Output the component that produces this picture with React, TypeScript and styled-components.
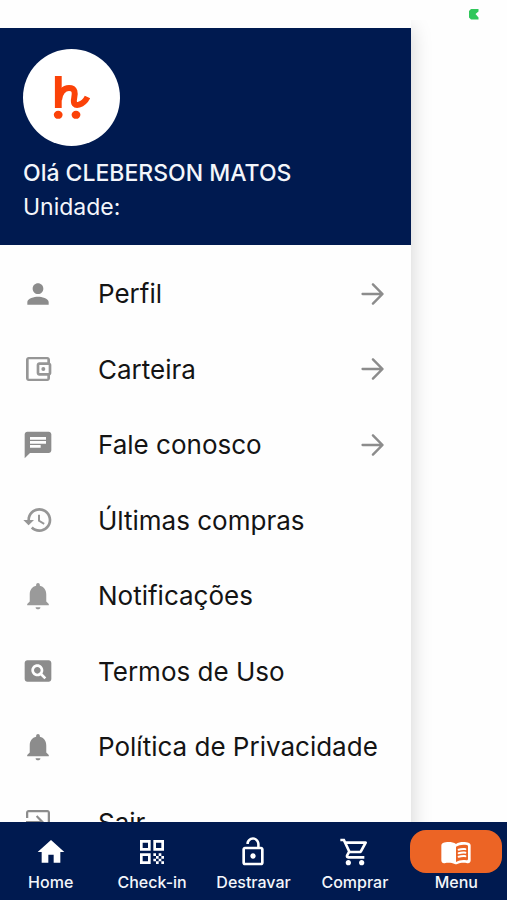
import React from "react";
import styled, { createGlobalStyle } from "styled-components";

const navy = "#001a50";
const orange = "#ec6425";

const GlobalStyle = createGlobalStyle`
  *, *::before, *::after { box-sizing: border-box; }
  body {
    margin: 0;
    background: #fff;
    font-family: Inter, Roboto, "Liberation Sans", sans-serif;
  }
`;

const Screen = styled.div`
  display: flex;
  flex-direction: column;
  height: 100vh;
  overflow: hidden;
  background: #fefefe;
`;

const StatusBar = styled.div`
  display: flex;
  justify-content: flex-end;
  flex: none;
  height: 20px;
  padding: 9px 28px 0 0;
  background: #fefefe;
`;

const Content = styled.main`
  flex: 1;
  min-height: 0;
  overflow: hidden;
`;

const Drawer = styled.aside`
  width: 81%;
  min-height: 100%;
  padding-top: 8px;
  background: #fefefe;
  box-shadow: 0 8px 20px rgba(0, 0, 0, 0.18);
`;

const Profile = styled.header`
  padding: 21px 23px;
  background: ${navy};
  color: #f4f6fb;
`;

const Avatar = styled.div`
  display: grid;
  place-items: center;
  width: 97px;
  height: 97px;
  margin-bottom: 10px;
  border-radius: 50%;
  background: #fff;
`;

const Greeting = styled.h1`
  margin: 0;
  font-size: 23px;
  font-weight: 500;
  line-height: 34px;
  white-space: nowrap;
`;

const Unit = styled.p`
  margin: 0;
  font-size: 23px;
  line-height: 34px;
`;

const MenuList = styled.ul`
  display: grid;
  grid-template-rows: repeat(8, 1fr);
  height: 604px;
  margin: 11px 0 0;
  padding: 0;
  list-style: none;
`;

const MenuButton = styled.button`
  display: flex;
  align-items: center;
  width: 100%;
  height: 100%;
  padding: 0 22px;
  border: 0;
  background: none;
  color: #141414;
  font: inherit;
  font-size: 26px;
  text-align: left;
  cursor: pointer;
`;

const MenuLabel = styled.span`
  flex: 1;
  margin-left: 44px;
  white-space: nowrap;
`;

const Glyph = styled.svg<{ $tone: string }>`
  display: block;
  flex: none;
  width: 32px;
  height: 32px;
  fill: ${(p) => p.$tone};
`;

const BottomNav = styled.nav`
  display: grid;
  grid-template-columns: repeat(5, 1fr);
  flex: none;
  height: 78px;
  padding-top: 8px;
  background: ${navy};
`;

const Tab = styled.a`
  display: flex;
  flex-direction: column;
  align-items: center;
  color: #f4f6fb;
  font-size: 16px;
  font-weight: 500;
  line-height: 18px;
  text-decoration: none;
`;

const Pill = styled.span<{ $active: boolean }>`
  display: grid;
  place-items: center;
  width: 92px;
  height: 43px;
  border-radius: 16px;
  background: ${(p) => (p.$active ? orange : "transparent")};
`;

const icons = {
  person:
    "M12 12c2.21 0 4-1.79 4-4s-1.79-4-4-4-4 1.79-4 4 1.79 4 4 4zm0 2c-2.67 0-8 1.34-8 4v2h16v-2c0-2.66-5.33-4-8-4z",
  wallet:
    "M21 7.28V5c0-1.1-.9-2-2-2H5c-1.11 0-2 .9-2 2v14c0 1.1.89 2 2 2h14c1.1 0 2-.9 2-2v-2.28c.59-.35 1-.98 1-1.72V9c0-.74-.41-1.37-1-1.72zM20 9v6h-7V9h7zM5 19.4V4.6h14v2.4h-6c-1.1 0-2 .9-2 2v6c0 1.1.9 2 2 2h6v2.4H5zM16 10.5a1.5 1.5 0 1 0 0 3 1.5 1.5 0 0 0 0-3z",
  chat:
    "M20 2H4c-1.1 0-1.99.9-1.99 2L2 22l4-4h14c1.1 0 2-.9 2-2V4c0-1.1-.9-2-2-2zM6 9h12v2H6V9zm8 5H6v-2h8v2zm4-6H6V6h12v2z",
  history:
    "M13 3c-4.97 0-9 4.03-9 9H1l3.89 3.89.07.14L9 12H6c0-3.87 3.13-7 7-7s7 3.13 7 7-3.13 7-7 7c-1.93 0-3.68-.79-4.94-2.06l-1.42 1.42C8.27 19.99 10.51 21 13 21c4.97 0 9-4.03 9-9s-4.03-9-9-9zm-1 5v5l4.28 2.54.72-1.21-3.5-2.08V8H12z",
  bell:
    "M12 22c1.1 0 1.8-.6 1.8-1.6h-3.600c0 1 .7 1.6 1.8 1.6zM18.2 16.200v-5.400c0-3.300-1.800-5.700-4.800-6.400v-.7c0-.83-.6-1.500-1.400-1.500s-1.400.67-1.400 1.500v.7c-3 .7-4.800 3.100-4.800 6.400v5.400L3.900 18v1h16.200v-1z",
  pageview:
    "M11.5 9C10.12 9 9 10.12 9 11.5s1.12 2.5 2.5 2.5 2.5-1.12 2.5-2.5S12.88 9 11.5 9zM20 4H4c-1.1 0-2 .9-2 2v12c0 1.1.9 2 2 2h16c1.1 0 2-.9 2-2V6c0-1.1-.9-2-2-2zm-3.21 14.21l-2.91-2.91c-.69.44-1.51.7-2.39.7C9.01 16 7 13.99 7 11.5S9.01 7 11.5 7 16 9.01 16 11.5c0 .88-.26 1.69-.7 2.39l2.91 2.9-1.42 1.42z",
  exit:
    "M10.4 15.9L11.5 17l5-5-5-5-1.1 1.1L13.4 11.2H3v1.6h10.4l-3 3.1zM19 3H5c-1.11 0-2 .9-2 2v4h1.7V4.7h14.6v14.6H4.7V15H3v4c0 1.1.89 2 2 2h14c1.1 0 2-.9 2-2V5c0-1.1-.9-2-2-2z",
  arrow:
    "M11.300 4.200c.4-.4 1-.4 1.300 0l7.200 7.200c.3.3.3.900 0 1.200l-7.200 7.200c-.3.4-.9.4-1.300 0s-.3-.9 0-1.300l5.600-5.600H4.200c-.5 0-.9-.4-.9-.9s.4-.9.9-.9h12.700l-5.600-5.600c-.3-.4-.4-.9 0-1.300z",
  home: "M10 20v-6h4v6h5v-8h3L12 3 2 12h3v8z",
  qr:
    "M3 11h8V3H3v8zm2-6h4v4H5V5zM3 21h8v-8H3v8zm2-6h4v4H5v-4zM13 3v8h8V3h-8zm6 6h-4V5h4v4zM19 19h2v2h-2zM13 13h2v2h-2zM15 15h2v2h-2zM13 17h2v2h-2zM15 19h2v2h-2zM17 17h2v2h-2zM17 13h2v2h-2zM19 15h2v2h-2z",
  lock:
    "M12 17c1.1 0 2-.9 2-2s-.9-2-2-2-2 .9-2 2 .9 2 2 2zm6-9h-1V6c0-2.76-2.24-5-5-5S7 3.24 7 6h1.9c0-1.71 1.39-3.1 3.1-3.1 1.71 0 3.1 1.39 3.1 3.1v2H6c-1.1 0-2 .9-2 2v10c0 1.1.9 2 2 2h12c1.1 0 2-.9 2-2V10c0-1.1-.9-2-2-2zm0 12H6V10h12v10z",
  cart:
    "M15.55 13c.75 0 1.41-.41 1.75-1.03l3.58-6.49A.996.996 0 0 0 20.01 4H5.21l-.94-2H1v2h2l3.6 7.59-1.35 2.44C4.52 15.37 5.48 17 7 17h12v-2H7l1.1-2h7.45zM6.16 6h12.15l-2.76 5H8.53L6.16 6zM7 18c-1.1 0-1.99.9-1.99 2S5.9 22 7 22s2-.9 2-2-.9-2-2-2zm10 0c-1.1 0-1.99.9-1.99 2s.89 2 1.99 2 2-.9 2-2-.9-2-2-2z",
  book:
    "M17.5 4.5c-1.95 0-4.05.4-5.5 1.5-1.45-1.1-3.55-1.5-5.5-1.5-1.45 0-2.99.22-4.28.79C1.49 5.62 1 6.33 1 7.14v11.28c0 1.3 1.22 2.26 2.48 1.94.98-.25 2.02-.36 3.02-.36 1.56 0 3.22.26 4.56.92.6.3 1.28.3 1.87 0 1.34-.67 3-.92 4.56-.92 1 0 2.04.11 3.02.36 1.26.33 2.48-.63 2.48-1.94V7.14c0-.81-.49-1.52-1.22-1.85-1.28-.57-2.82-.79-4.27-.79zM21 17.23c0 .63-.58 1.09-1.2.98-.75-.14-1.53-.2-2.3-.2-1.7 0-4.15.65-5.5 1.5V8c1.35-.85 3.8-1.5 5.5-1.5.92 0 1.83.09 2.7.28.46.1.8.51.8.98v9.47zM13.98 11.01c-.32 0-.61-.2-.71-.52-.13-.39.09-.82.48-.94 1.54-.5 3.53-.66 5.36-.45.41.05.71.42.66.83-.05.41-.42.71-.83.66-1.62-.19-3.39-.04-4.73.39-.08.01-.16.03-.23.03zM13.98 13.67c-.32 0-.61-.2-.71-.52-.13-.39.09-.82.48-.94 1.53-.5 3.53-.66 5.36-.45.41.05.71.42.66.83-.05.41-.42.71-.83.66-1.62-.19-3.39-.04-4.73.39-.08.02-.16.03-.23.03zM13.98 16.33c-.32 0-.61-.2-.71-.52-.13-.39.09-.82.48-.94 1.53-.5 3.53-.66 5.36-.45.41.05.71.42.66.83-.05.41-.42.7-.83.66-1.62-.19-3.39-.04-4.73.39-.08.02-.16.03-.23.03z",
};

type IconName = keyof typeof icons;

const Icon = ({ name, tone }: { name: IconName; tone: string }) => (
  <Glyph viewBox="0 0 24 24" $tone={tone} aria-hidden="true">
    <path d={icons[name]} />
  </Glyph>
);

const Logo = () => (
  <svg width="40" height="46" viewBox="1 3 40 46" aria-hidden="true">
    <g fill="none" stroke="#fb4208" strokeLinejoin="round">
      <path d="M7.3 4V36" strokeWidth="6.8" />
      <path
        d="M8 28C8.5 20.5 13 16 18 16C24.5 16 24.2 21 23.2 26C22 31.5 24 33.8 28 32.7C32 31.5 34.5 29 36.500 25"
        strokeWidth="6"
      />
    </g>
    <ellipse cx="7.2" cy="42.8" rx="4.4" ry="4" fill="#fb4208" />
    <ellipse cx="25" cy="42.8" rx="4.4" ry="4" fill="#fb4208" />
  </svg>
);

const menu: { label: string; icon: IconName; tone: string; arrow?: boolean }[] = [
  { label: "Perfil", icon: "person", tone: "#8c8c8c", arrow: true },
  { label: "Carteira", icon: "wallet", tone: "#969696", arrow: true },
  { label: "Fale conosco", icon: "chat", tone: "#8c8c8c", arrow: true },
  { label: "Últimas compras", icon: "history", tone: "#969696" },
  { label: "Notificações", icon: "bell", tone: "#9a9a9a" },
  { label: "Termos de Uso", icon: "pageview", tone: "#8c8c8c" },
  { label: "Política de Privacidade", icon: "bell", tone: "#8c8c8c" },
  { label: "Sair", icon: "exit", tone: "#8c8c8c" },
];

const tabs: { label: string; icon: IconName; active?: boolean }[] = [
  { label: "Home", icon: "home" },
  { label: "Check-in", icon: "qr" },
  { label: "Destravar", icon: "lock" },
  { label: "Comprar", icon: "cart" },
  { label: "Menu", icon: "book", active: true },
];

export default function App() {
  return (
    <>
      <GlobalStyle />
      <Screen>
        <StatusBar>
          <svg width="10" height="11" viewBox="0 0 10 11" aria-hidden="true">
            <path d="M2 0H9.5V2.5L6.5 5L9.5 8.5V10.5H2L0 8.5V2Z" fill="#30c75b" />
          </svg>
        </StatusBar>
        <Content>
          <Drawer>
            <Profile>
              <Avatar>
                <Logo />
              </Avatar>
              <Greeting>Olá CLEBERSON MATOS</Greeting>
              <Unit>Unidade:</Unit>
            </Profile>
            <MenuList>
              {menu.map((item) => (
                <li key={item.label}>
                  <MenuButton type="button">
                    <Icon name={item.icon} tone={item.tone} />
                    <MenuLabel>{item.label}</MenuLabel>
                    {item.arrow && <Icon name="arrow" tone="#8c8c8c" />}
                  </MenuButton>
                </li>
              ))}
            </MenuList>
          </Drawer>
        </Content>
        <BottomNav>
          {tabs.map((tab) => (
            <Tab key={tab.label} href="#" aria-current={tab.active ? "page" : undefined}>
              <Pill $active={!!tab.active}>
                <Icon name={tab.icon} tone="#fff" />
              </Pill>
              {tab.label}
            </Tab>
          ))}
        </BottomNav>
      </Screen>
    </>
  );
}
